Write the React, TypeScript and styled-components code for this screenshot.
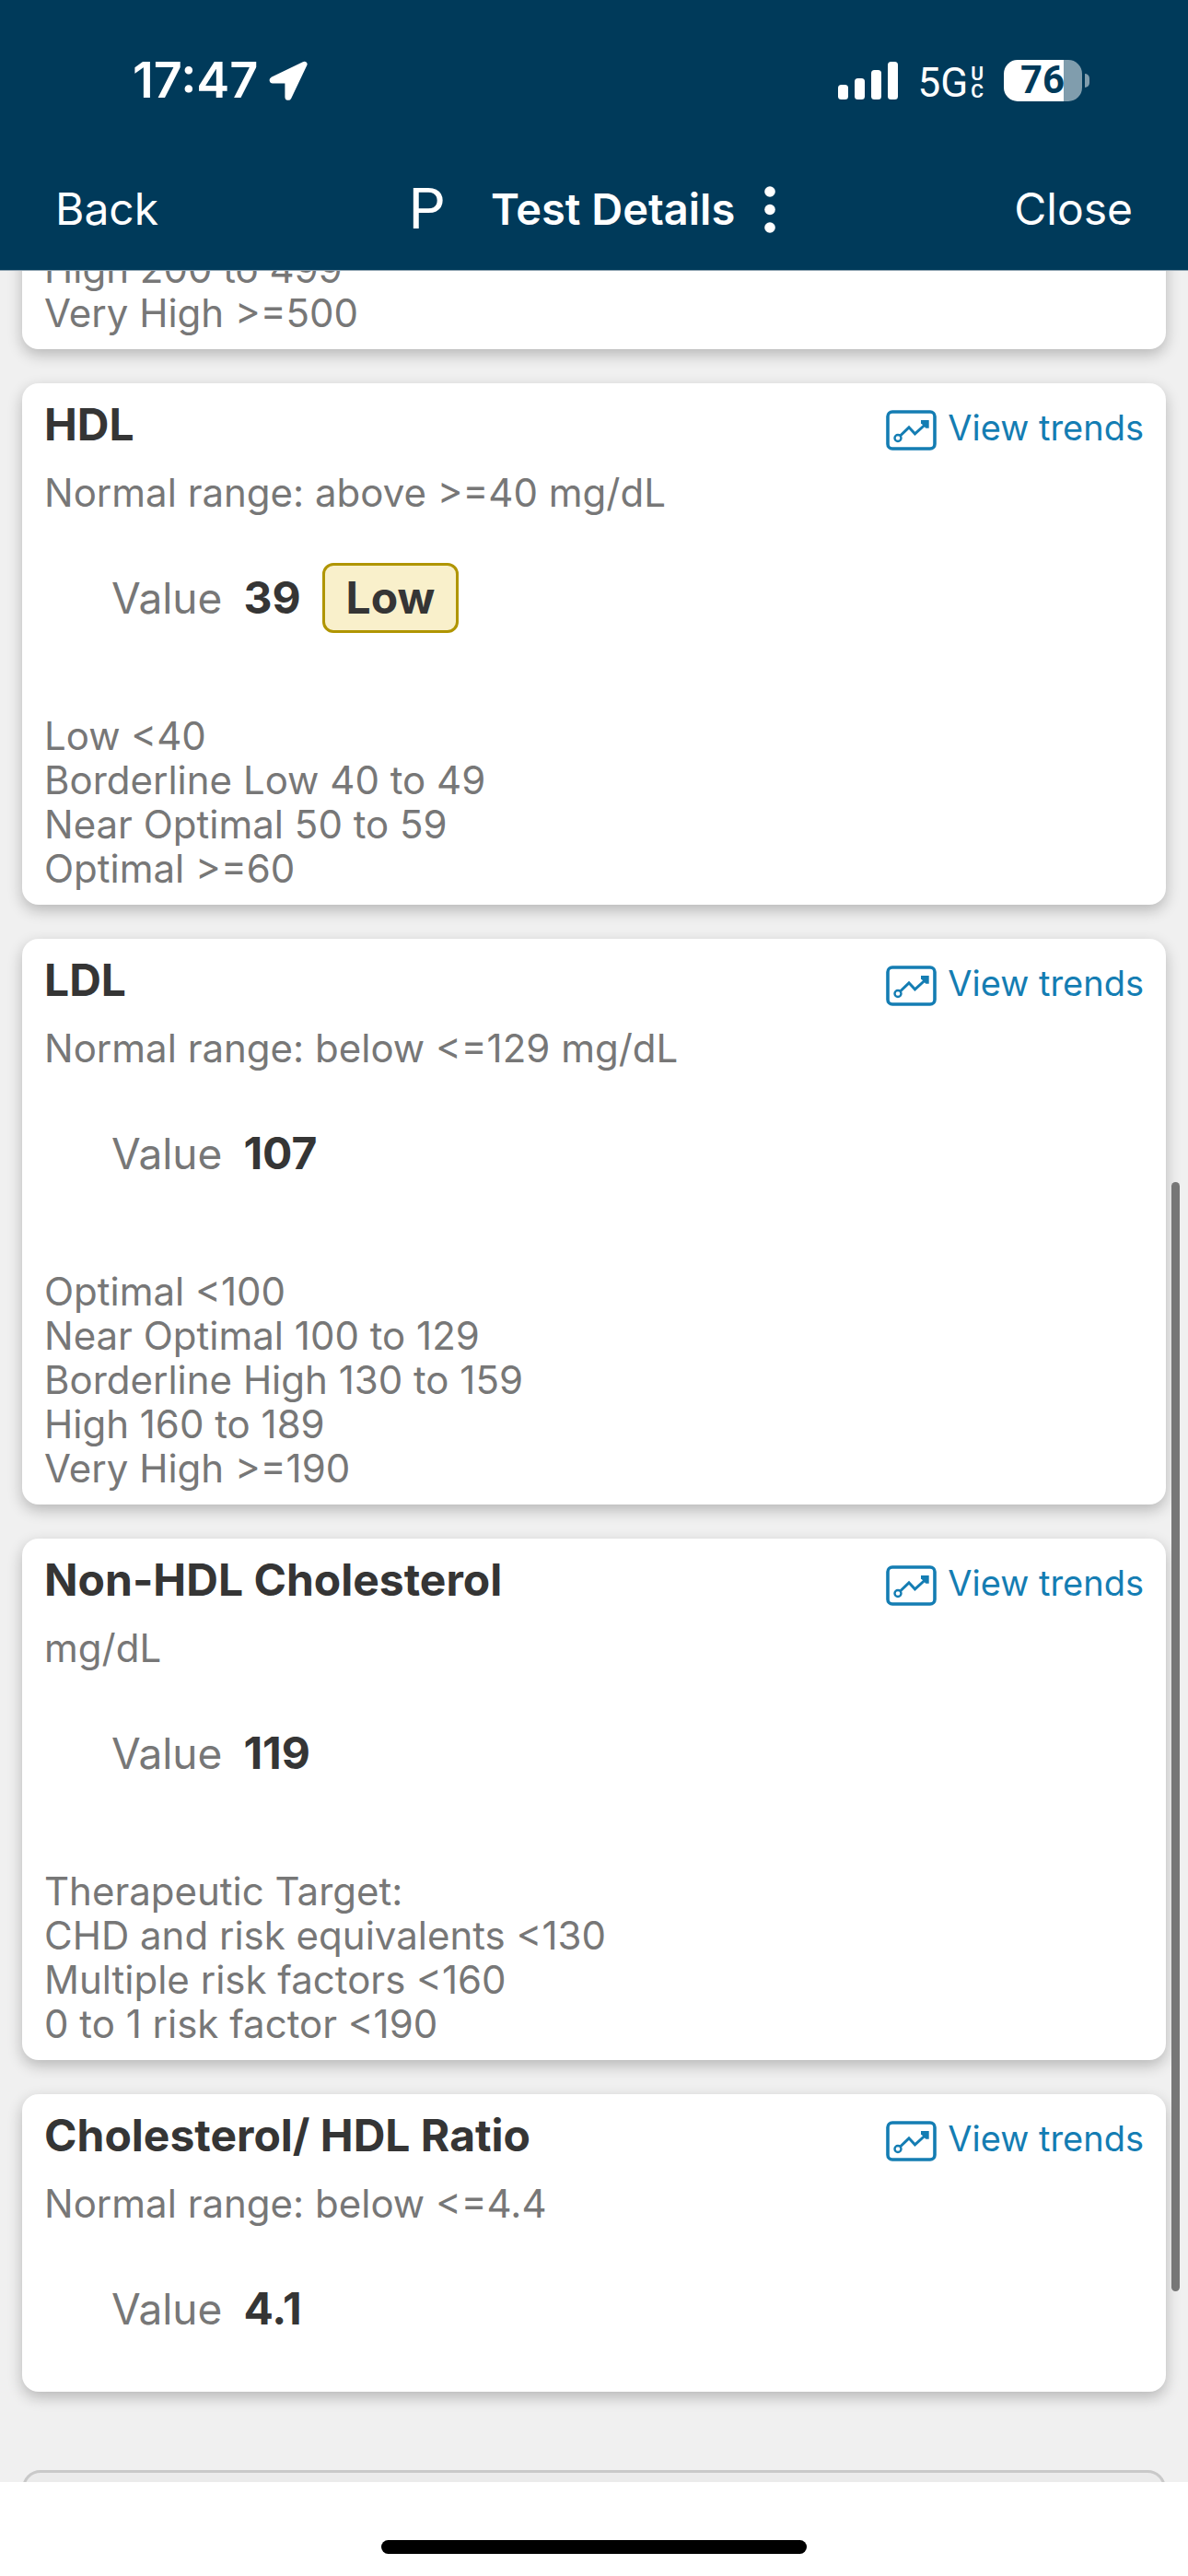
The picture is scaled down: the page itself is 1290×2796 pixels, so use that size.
import React from "react";
import styled, { createGlobalStyle } from "styled-components";

const GlobalStyle = createGlobalStyle`
  * { box-sizing: border-box; }
  html, body { margin: 0; padding: 0; }
  body {
    font-family: Inter, "Liberation Sans", sans-serif;
    background: #ffffff;
    color: #353535;
  }
  button { font-family: inherit; }
`;

const Screen = styled.div`
  display: flex;
  flex-direction: column;
  height: 100vh;
  overflow: hidden;
`;

const Header = styled.header`
  flex: none;
  background: #003a5a;
  color: #ffffff;
  border-bottom: 1px solid #8fa3b1;
`;

const StatusBar = styled.div`
  display: flex;
  align-items: center;
  justify-content: space-between;
  height: 161px;
  padding: 13px 107px 0 144px;
`;

const StatusGroup = styled.div<{ $gap: number }>`
  display: flex;
  align-items: center;
  gap: ${(p) => p.$gap}px;
`;

const Clock = styled.time`
  font-size: 54px;
  line-height: 64px;
  font-weight: 600;
`;

const Network = styled.span`
  display: flex;
  align-items: center;
  gap: 3px;
  padding-top: 5px;
  font-family: Roboto, sans-serif;
  font-size: 44px;
  line-height: 48px;
`;

const NetworkSuffix = styled.span`
  display: flex;
  flex-direction: column;
  font-size: 21px;
  line-height: 19px;
  font-weight: 600;
`;

const BatteryWrap = styled.div`
  display: flex;
  align-items: center;
  gap: 3px;
`;

const Battery = styled.div<{ $level: number }>`
  display: flex;
  align-items: center;
  justify-content: center;
  width: 85px;
  height: 45px;
  padding-right: 1px;
  border-radius: 15px;
  background: linear-gradient(
    to right,
    #ffffff ${(p) => p.$level}%,
    #809dad ${(p) => p.$level}%
  );
  color: #003a5a;
  font-family: Roboto, sans-serif;
  font-size: 42px;
  line-height: 44px;
  font-weight: 700;
`;

const BatteryTip = styled.span`
  width: 5px;
  height: 15px;
  border-radius: 0 5px 5px 0;
  background: #809dad;
`;

const NavBar = styled.nav`
  display: grid;
  grid-template-columns: 1fr auto 1fr;
  align-items: center;
  height: 132px;
  padding: 0 60px;
`;

const NavButton = styled.button<{ $end?: boolean }>`
  justify-self: ${(p) => (p.$end ? "end" : "start")};
  padding: 0;
  border: 0;
  background: none;
  color: inherit;
  font-size: 48px;
  line-height: 60px;
`;

const NavCenter = styled.div`
  display: flex;
  align-items: center;
  gap: 28px;
`;

const Avatar = styled.span`
  margin-right: 22px;
  font-family: Roboto, sans-serif;
  font-size: 62px;
  line-height: 72px;
  font-weight: 400;
`;

const NavTitle = styled.h1`
  margin: 0;
  font-size: 47px;
  line-height: 56px;
  font-weight: 600;
`;

const MenuButton = styled.button`
  display: flex;
  padding: 0 4px;
  border: 0;
  background: none;
  color: inherit;
`;

const Content = styled.main`
  position: relative;
  flex: 1;
  min-height: 0;
  overflow: hidden;
  background: #f0f0f0;
`;

const Results = styled.div`
  display: flex;
  flex-direction: column;
  gap: 37px;
  margin-top: -42px;
  padding: 0 24px;
`;

const Card = styled.article`
  padding: 16px 24px 15px;
  border-radius: 18px;
  background: #ffffff;
  box-shadow: 0 6px 16px rgba(0, 0, 0, 0.24);
`;

const CardHead = styled.div`
  display: flex;
  align-items: baseline;
  justify-content: space-between;
`;

const CardTitle = styled.h2`
  margin: 0;
  font-size: 48px;
  line-height: 58px;
  font-weight: 700;
`;

const TrendsLink = styled.a`
  display: flex;
  align-items: baseline;
  gap: 12px;
  color: #147db3;
  font-size: 38px;
  line-height: 48px;
  text-decoration: none;

  svg {
    position: relative;
    top: 11px;
  }
`;

const NormalRange = styled.p`
  margin: 21px 0 52px;
  color: #777777;
  font-size: 42px;
  line-height: 48px;
`;

const ValueRow = styled.div`
  display: flex;
  align-items: center;
  gap: 23px;
  height: 76px;
  margin-bottom: 37px;
  padding-left: 73px;
  color: #777777;
  font-size: 46px;
  line-height: 56px;
`;

const Value = styled.strong`
  color: #353535;
  font-size: 48px;
  font-weight: 700;
`;

const Flag = styled.strong`
  padding: 7px 23px;
  border: 3px solid #b09500;
  border-radius: 12px;
  background: #f9f0cb;
  color: #353535;
  font-size: 48px;
`;

const RangeList = styled.ul<{ $spaced?: boolean }>`
  margin: 0;
  padding: ${(p) => (p.$spaced ? 51 : 0)}px 0 0;
  list-style: none;
  color: #777777;
  font-size: 42px;
  line-height: 48px;
`;

const NextPanel = styled.div`
  height: 160px;
  margin-top: 48px;
  border: 3px solid #c9c9c9;
  border-radius: 20px;
  background: #ebebeb;
`;

const ScrollThumb = styled.div`
  position: absolute;
  top: 989px;
  right: 9px;
  width: 9px;
  height: 1204px;
  border-radius: 5px;
  background: #777777;
`;

const HomeArea = styled.footer`
  display: flex;
  justify-content: center;
  flex: none;
  height: 102px;
  padding-top: 63px;
  background: #ffffff;
`;

const HomeIndicator = styled.div`
  width: 462px;
  height: 15px;
  border-radius: 8px;
  background: #000000;
`;

const LocationIcon = () => (
  <svg width="42" height="43" viewBox="0 0 42 43" aria-hidden="true">
    <path
      d="M38 2.300 3.200 19.200c-1.800 1-1.200 3.800.8 3.800h14.900v16.200c0 2.400 3 2.900 4 .8L40 4.200c.5-1.300-.8-2.400-2-1.900Z"
      fill="currentColor"
      stroke="currentColor"
      strokeWidth="3"
      strokeLinejoin="round"
    />
  </svg>
);

const SignalIcon = () => (
  <svg width="65" height="41" viewBox="0 0 65 41" fill="currentColor" aria-hidden="true">
    <rect x="0" y="25" width="11" height="16" rx="3.500" />
    <rect x="18" y="18" width="11" height="23" rx="3.500" />
    <rect x="36" y="9" width="11" height="32" rx="3.500" />
    <rect x="54" y="0" width="11" height="41" rx="3.500" />
  </svg>
);

const DotsIcon = () => (
  <svg width="12" height="51" viewBox="0 0 12 51" fill="currentColor" aria-hidden="true">
    <circle cx="6" cy="6" r="5.800" />
    <circle cx="6" cy="25.500" r="5.800" />
    <circle cx="6" cy="45" r="5.800" />
  </svg>
);

const TrendIcon = () => (
  <svg
    width="55"
    height="44"
    viewBox="0 0 55 44"
    fill="none"
    stroke="currentColor"
    strokeWidth="3"
    aria-hidden="true"
  >
    <rect x="2" y="2" width="51" height="40" rx="5" strokeWidth="3.600" />
    <circle cx="13" cy="30.500" r="3.500" strokeWidth="2.400" />
    <path d="M15.500 28 25 18.800l6.500 7L43.500 15" />
    <path d="M38 11h8.700v8.700h-3.400L38 14.200Z" fill="currentColor" stroke="none" />
  </svg>
);

type Result = {
  name: string;
  normal: string;
  value: string;
  flag?: string;
  ranges?: string[];
};

const results: Result[] = [
  {
    name: "HDL",
    normal: "Normal range: above >=40 mg/dL",
    value: "39",
    flag: "Low",
    ranges: ["Low <40", "Borderline Low 40 to 49", "Near Optimal 50 to 59", "Optimal >=60"],
  },
  {
    name: "LDL",
    normal: "Normal range: below <=129 mg/dL",
    value: "107",
    ranges: [
      "Optimal <100",
      "Near Optimal 100 to 129",
      "Borderline High 130 to 159",
      "High 160 to 189",
      "Very High >=190",
    ],
  },
  {
    name: "Non-HDL Cholesterol",
    normal: "mg/dL",
    value: "119",
    ranges: [
      "Therapeutic Target:",
      "CHD and risk equivalents <130",
      "Multiple risk factors <160",
      "0 to 1 risk factor <190",
    ],
  },
  { name: "Cholesterol/ HDL Ratio", normal: "Normal range: below <=4.4", value: "4.1" },
];

const ResultCard = ({ result }: { result: Result }) => (
  <Card>
    <CardHead>
      <CardTitle>{result.name}</CardTitle>
      <TrendsLink href="#trends">
        <TrendIcon />
        View trends
      </TrendsLink>
    </CardHead>
    <NormalRange>{result.normal}</NormalRange>
    <ValueRow>
      <span>Value</span>
      <Value>{result.value}</Value>
      {result.flag && <Flag>{result.flag}</Flag>}
    </ValueRow>
    {result.ranges && (
      <RangeList $spaced>
        {result.ranges.map((range) => (
          <li key={range}>{range}</li>
        ))}
      </RangeList>
    )}
  </Card>
);

export default function App() {
  return (
    <>
      <GlobalStyle />
      <Screen>
        <Header>
          <StatusBar>
            <StatusGroup $gap={12}>
              <Clock>17:47</Clock>
              <LocationIcon />
            </StatusGroup>
            <StatusGroup $gap={22}>
              <SignalIcon />
              <Network>
                5G
                <NetworkSuffix>
                  <span>U</span>
                  <span>C</span>
                </NetworkSuffix>
              </Network>
              <BatteryWrap>
                <Battery $level={76}>76</Battery>
                <BatteryTip />
              </BatteryWrap>
            </StatusGroup>
          </StatusBar>
          <NavBar>
            <NavButton type="button">Back</NavButton>
            <NavCenter>
              <Avatar>P</Avatar>
              <NavTitle>Test Details</NavTitle>
              <MenuButton type="button" aria-label="More options">
                <DotsIcon />
              </MenuButton>
            </NavCenter>
            <NavButton type="button" $end>
              Close
            </NavButton>
          </NavBar>
        </Header>
        <Content>
          <Results>
            <Card>
              <RangeList>
                <li>High 200 to 499</li>
                <li>Very High &gt;=500</li>
              </RangeList>
            </Card>
            {results.map((result) => (
              <ResultCard key={result.name} result={result} />
            ))}
            <NextPanel />
          </Results>
          <ScrollThumb />
        </Content>
        <HomeArea>
          <HomeIndicator />
        </HomeArea>
      </Screen>
    </>
  );
}
